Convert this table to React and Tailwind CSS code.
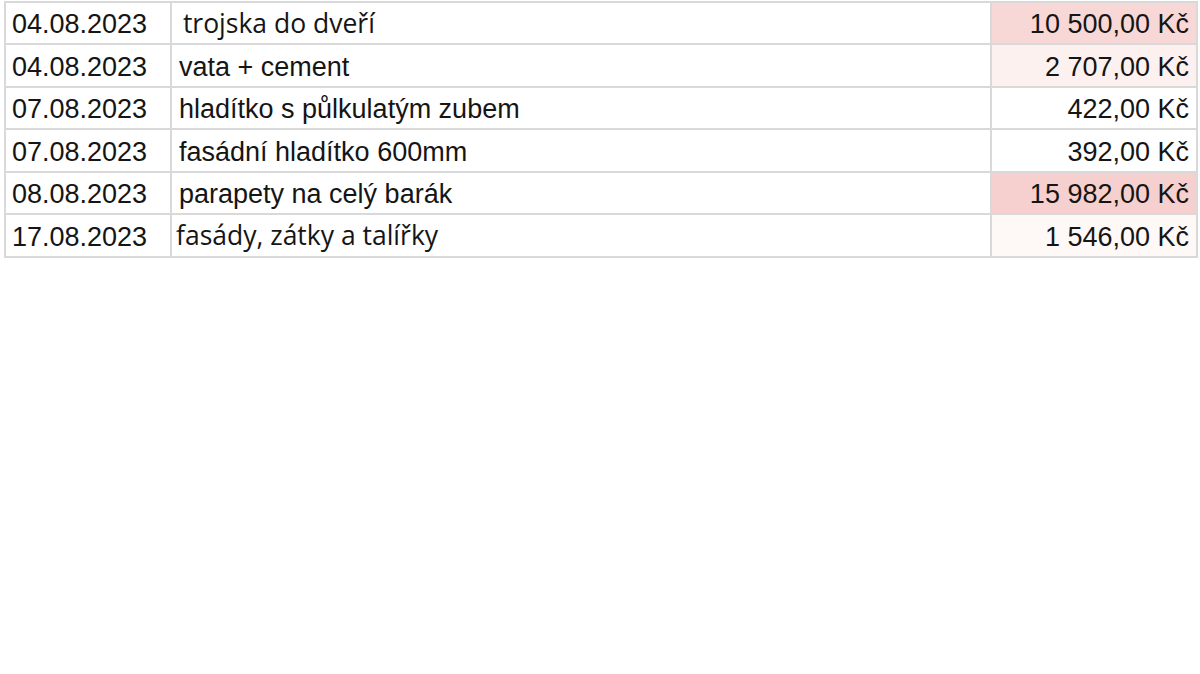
import React from "react"

const rows = [
  { date: "04.08.2023", text: "\u00a0trojska do dveří", amount: "10 500,00 Kč", bg: "bg-[#f7d8d6]", open: true, h: "h-[40px]" },
  { date: "04.08.2023", text: "vata + cement", amount: "2 707,00 Kč", bg: "bg-[#fdf1f0]", h: "h-[41px]" },
  { date: "07.08.2023", text: "hladítko s půlkulatým zubem", amount: "422,00 Kč", bg: "bg-white", h: "h-[40px]" },
  { date: "07.08.2023", text: "fasádní hladítko 600mm", amount: "392,00 Kč", bg: "bg-white", h: "h-[41px]" },
  { date: "08.08.2023", text: "parapety na celý barák", amount: "15 982,00 Kč", bg: "bg-[#f5d0ce]", h: "h-[40px]" },
  { date: "17.08.2023", text: "fasády, zátky a talířky", amount: "1 546,00 Kč", bg: "bg-[#fef8f7]", open: true, h: "h-[41px]" },
]

export default function App() {
  return (
    <div className="w-[1200px] h-[674px] bg-white overflow-hidden pt-[1px] pl-[4px]">
      <div className="grid grid-cols-[164px_818px_204px] gap-[2px] p-[2px] w-[1194px] bg-[#d9d9d9] text-[#151515] font-['Liberation_Sans',Arial,sans-serif]">
        {rows.map(function (r, i) {
          return (
            <React.Fragment key={i}>
              <div className={"bg-white flex items-center pl-[6px] pt-[3px] text-[27px] whitespace-nowrap " + r.h}>{r.date}</div>
              <div
                className={
                  r.open
                    ? "bg-white flex items-center pl-[4px] pt-[1px] text-[26.5px] whitespace-nowrap font-['Open_Sans',sans-serif] " + r.h
                    : "bg-white flex items-center pl-[7px] pt-[3px] text-[27px] whitespace-nowrap " + r.h
                }
              >
                {r.text}
              </div>
              <div className={"flex items-center justify-end pr-[7px] pt-[3px] text-[27px] whitespace-nowrap " + r.bg + " " + r.h}>{r.amount}</div>
            </React.Fragment>
          )
        })}
      </div>
    </div>
  )
}
